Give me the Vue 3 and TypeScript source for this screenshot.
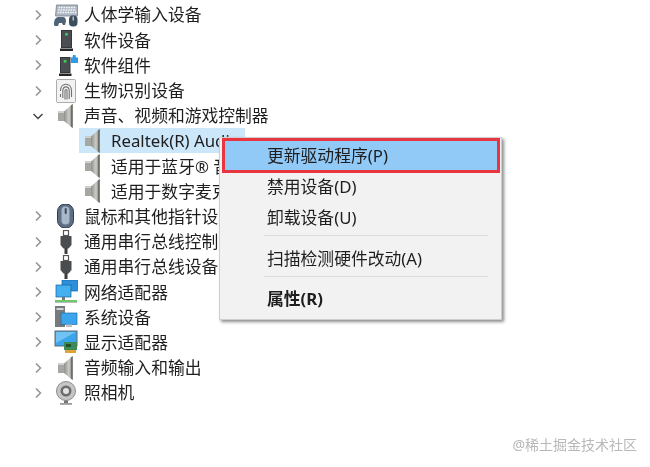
<template>
  <div class="page">
    <svg class="defs" width="0" height="0" aria-hidden="true">
      <defs>
        <linearGradient id="cone" x1="0" y1="0" x2="1" y2="0">
          <stop offset="0" stop-color="#8f8f8c" />
          <stop offset=".55" stop-color="#c9c9c6" />
          <stop offset="1" stop-color="#a2a29e" />
        </linearGradient>
        <symbol id="ic-speaker" viewBox="0 0 24 24">
          <rect x="4" y="7.500" width="6" height="9.500" fill="#a6a6a3" />
          <path d="M10 7.500 18.500 0v24L10 17Z" fill="url(#cone)" />
          <path d="M16.800 1.500 18.800 0v24l-2-1.500Z" fill="#6f6f6a" />
          <path d="M4 7.500h6V9H4Z" fill="#d0d0ce" />
        </symbol>
        <symbol id="ic-keyboard" viewBox="0 0 24 24">
          <path d="M2.500 2h21v11H1.500Z" fill="#aeb7c4" stroke="#76828f" stroke-width=".8" />
          <path d="M4.500 4.500h17M4 7h18M3.500 9.500h19" stroke="#f4f5f7" stroke-width="1.400" stroke-dasharray="1.700 .8" />
          <path d="M0 22c0-6 2-8 5-8h4c2 0 3 2 3 4l-1 4H9l-1-2H5l-1 3H1Z" fill="#4e6278" />
          <rect x="15" y="12.500" width="8.500" height="11" rx="3.800" fill="#3d4e60" />
          <rect x="18.600" y="13.500" width="1.300" height="4" fill="#c9d3dc" />
        </symbol>
        <symbol id="ic-device" viewBox="0 0 24 24">
          <rect x="7" y="2" width="11" height="18" fill="#33363a" />
          <rect x="8" y="3" width="9" height="16" fill="#4a4e53" />
          <rect x="11.200" y="5" width="2.600" height="2.600" fill="#3ecf5a" />
          <path d="M6 20.500h13V23H6Z" fill="#24262a" />
        </symbol>
        <symbol id="ic-component" viewBox="0 0 24 24">
          <rect x="6" y="4" width="10.500" height="16" fill="#33363a" />
          <rect x="7" y="5" width="8.500" height="14" fill="#4a4e53" />
          <rect x="9.800" y="7" width="2.600" height="2.600" fill="#3ecf5a" />
          <path d="M5 20.500h12.500V23H5Z" fill="#24262a" />
          <path d="M17 4.500h1.500L19 2h2.500l.5 2.500h2.500V10H17Z" fill="#2f9be6" />
        </symbol>
        <symbol id="ic-finger" viewBox="0 0 24 24">
          <rect x="2.500" y="0.500" width="19" height="23" rx="1" fill="#f1f2f1" stroke="#a9adab" />
          <g fill="none" stroke="#6f7271" stroke-width="1.100">
            <path d="M6.500 12c0-9 11-9 11 0v6" />
            <path d="M8.800 19v-7c0-5.500 6.400-5.500 6.400 0v8" />
            <path d="M11 20.500V12c0-2 2-2 2 0v8.500" />
            <path d="M6.500 15v3" />
          </g>
        </symbol>
        <symbol id="ic-mouse" viewBox="0 0 24 24">
          <rect x="3.500" y="0" width="16" height="24" rx="7.500" fill="#5c6f85" stroke="#2e3a48" />
          <rect x="7.500" y="2.500" width="8" height="18" rx="4" fill="#a9b8c8" />
          <rect x="10.700" y="4" width="2" height="6" rx="1" fill="#3c4b5c" />
        </symbol>
        <symbol id="ic-usb" viewBox="0 0 24 24">
          <rect x="9.500" y="0.500" width="5" height="5" fill="none" stroke="#555" stroke-width="1.200" />
          <path d="M6.500 6h11v9l-3 3.500h-5l-3-3.500Z" fill="#4a4d50" />
          <rect x="10.500" y="18" width="3" height="6" fill="#3a3c3e" />
        </symbol>
        <symbol id="ic-network" viewBox="0 0 24 24">
          <rect x="8" y="0" width="15.500" height="11" fill="#2b8fdc" stroke="#15629f" stroke-width=".7" />
          <rect x="2" y="5" width="15" height="12" fill="#45b0ef" stroke="#15629f" stroke-width=".7" />
          <path d="M8 17h3v3H8Z" fill="#777" />
          <path d="M1 20h22v3H1Z" fill="#6fc96a" />
          <path d="M1 22.500h22" stroke="#b9bcb9" />
        </symbol>
        <symbol id="ic-system" viewBox="0 0 24 24">
          <rect x="1" y="1" width="10" height="21" fill="#777a7d" />
          <rect x="2.500" y="3" width="7" height="2" fill="#d2d4d6" />
          <rect x="7" y="8" width="16" height="11.500" fill="#3aa5ea" stroke="#1b6eaa" stroke-width=".7" />
          <path d="M12 19.500h6V22h-6Z" fill="#bfc3c6" />
        </symbol>
        <symbol id="ic-display" viewBox="0 0 24 24">
          <rect x="1" y="1" width="22" height="15" fill="#3aa5ea" stroke="#5f6a72" stroke-width="1" />
          <path d="M2 2h20L2 13Z" fill="#71c3f3" />
          <rect x="10" y="12" width="13" height="8" fill="#3e8a57" />
          <rect x="12" y="14" width="5" height="3" fill="#21502f" />
          <rect x="11" y="20" width="11" height="3" fill="#e0a33a" />
        </symbol>
        <symbol id="ic-camera" viewBox="0 0 24 24">
          <circle cx="12" cy="10" r="9.500" fill="#c4c5c4" stroke="#8b8c8b" />
          <circle cx="12" cy="10" r="5.500" fill="#6a6c6d" />
          <circle cx="12" cy="10" r="3" fill="#e1e2e2" />
          <path d="M10 19.500h4V22h-4Z" fill="#777" />
          <path d="M6 22h12v1.800H6Z" fill="#9a9b9a" />
        </symbol>
      </defs>
    </svg>

    <ul class="tree">
      <li
        v-for="row in rows"
        :key="row.label"
        class="row"
        :class="{ child: row.child }"
      >
        <span class="arrow">
          <svg v-if="!row.child" width="12" height="12" viewBox="0 0 12 12">
            <path
              :d="row.open ? 'M1.500 4 6 8.500 10.500 4' : 'M4 1.500 8.500 6 4 10.500'"
              fill="none"
              :stroke="row.open ? '#444' : '#929292'"
              stroke-width="1.500"
            />
          </svg>
        </span>
        <span class="line" :class="{ selected: row.selected }">
          <svg class="icon" width="24" height="24"><use :href="'#ic-' + row.icon" /></svg>
          <span class="label">{{ row.label }}</span>
        </span>
      </li>
    </ul>

    <div class="menu">
      <div class="item active">更新驱动程序(P)</div>
      <div class="item">禁用设备(D)</div>
      <div class="item">卸载设备(U)</div>
      <div class="sep"></div>
      <div class="item">扫描检测硬件改动(A)</div>
      <div class="sep"></div>
      <div class="item bold">属性(R)</div>
    </div>

    <div class="mark">@稀土掘金技术社区</div>
  </div>
</template>

<script setup lang="ts">
interface Row {
  label: string
  icon: string
  child?: boolean
  open?: boolean
  selected?: boolean
}

const rows: Row[] = [
  { label: '人体学输入设备', icon: 'keyboard' },
  { label: '软件设备', icon: 'device' },
  { label: '软件组件', icon: 'component' },
  { label: '生物识别设备', icon: 'finger' },
  { label: '声音、视频和游戏控制器', icon: 'speaker', open: true },
  { label: 'Realtek(R) Audio', icon: 'speaker', child: true, selected: true },
  { label: '适用于蓝牙® 音频', icon: 'speaker', child: true },
  { label: '适用于数字麦克风', icon: 'speaker', child: true },
  { label: '鼠标和其他指针设备', icon: 'mouse' },
  { label: '通用串行总线控制器', icon: 'usb' },
  { label: '通用串行总线设备', icon: 'usb' },
  { label: '网络适配器', icon: 'network' },
  { label: '系统设备', icon: 'system' },
  { label: '显示适配器', icon: 'display' },
  { label: '音频输入和输出', icon: 'speaker' },
  { label: '照相机', icon: 'camera' },
]
</script>

<style>
body {
  background: #fff;
}
</style>

<style scoped>
.page {
  position: relative;
  width: 650px;
  height: 467px;
  overflow: hidden;
  background: #fff;
  color: #1e1e1e;
  font-family: "Noto Sans", "Noto Sans CJK SC", sans-serif;
  font-size: 16.8px;
  filter: blur(0.35px);
}

.defs {
  position: absolute;
}

.tree {
  list-style: none;
  margin: 0;
  padding: 2.4px 0 0 32px;
}

.row {
  display: flex;
  align-items: center;
  height: 25.2px;
}

.arrow {
  display: flex;
  width: 22px;
  flex: none;
}

.line {
  display: flex;
  align-items: center;
  height: 25px;
  white-space: nowrap;
}

.child .line {
  margin-left: 25px;
  padding-left: 2px;
}

.selected {
  box-sizing: border-box;
  width: 166px;
  background: #cce6fa;
}

.icon {
  flex: none;
  margin-right: 6px;
}

.label {
  line-height: 25px;
}

.menu {
  position: absolute;
  left: 219px;
  top: 137px;
  box-sizing: border-box;
  width: 283px;
  height: 183px;
  padding: 0 1px 0 2px;
  background: #f2f2f2;
  border: 1px solid #cfcfcf;
  box-shadow: 2px 2px 3px rgba(0, 0, 0, 0.45);
}

.item {
  height: 31px;
  line-height: 31px;
  padding-left: 45px;
}

.active {
  box-sizing: border-box;
  height: 35px;
  margin-bottom: -2px;
  line-height: 29px;
  padding-left: 42px;
  background: #91c9f7;
  border: 3px solid #e8353f;
}

.sep {
  height: 1px;
  margin: 2px 12px 6.5px 42px;
  background: #dcdcdc;
}

.bold {
  font-weight: 700;
}

.mark {
  position: absolute;
  right: 13px;
  top: 435px;
  line-height: 20px;
  font-size: 14px;
  color: #b8b8b8;
}
</style>
